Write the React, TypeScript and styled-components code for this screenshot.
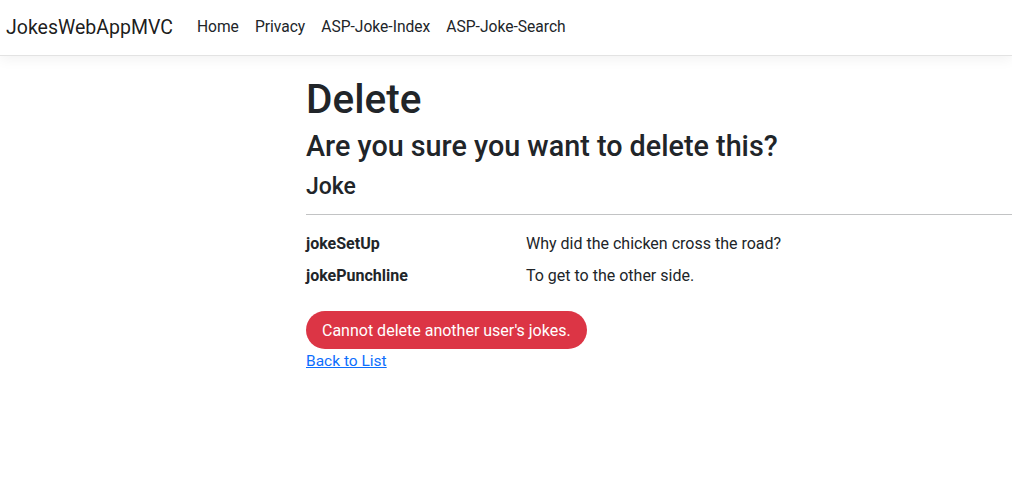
import * as React from "react";
import styled, { createGlobalStyle } from "styled-components";

const GlobalStyle = createGlobalStyle`
  body {
    margin: 0;
    font-family: Roboto, "Noto Sans", sans-serif;
    font-size: 16px;
    line-height: 1.5;
    color: #212529;
    background: #fff;
  }
`;

const Navbar = styled.header`
  display: flex;
  align-items: center;
  height: 55px;
  padding: 0 6px;
  border-bottom: 1px solid #e3e3e3;
  box-shadow: 0 4px 12px rgba(0, 0, 0, 0.05);
`;

const Brand = styled.a`
  font-size: 19.5px;
  color: rgba(0, 0, 0, 0.9);
  text-decoration: none;
  margin-right: 16px;
  white-space: nowrap;
`;

const NavList = styled.nav`
  display: flex;
  align-items: center;
`;

const NavLink = styled.a`
  font-size: 15.6px;
  padding: 8px;
  color: #212529;
  text-decoration: none;
`;

const Main = styled.main`
  display: flex;
  flex-direction: column;
  padding: 19px 0 0 306px;
`;

const Title = styled.h1`
  margin: 0 0 6px;
  font-size: 40.5px;
  line-height: 48px;
  font-weight: 500;
`;

const Question = styled.h3`
  margin: 0 0 9px;
  font-size: 28.75px;
  line-height: 35px;
  font-weight: 500;
`;

const Subject = styled.h4`
  margin: 0;
  font-size: 23px;
  line-height: 28px;
  font-weight: 500;
`;

const Rule = styled.hr`
  margin: 13px 0 17px;
  border: 0;
  border-top: 1px solid #c2c3c4;
`;

const Details = styled.dl`
  display: grid;
  grid-template-columns: 220px 1fr;
  row-gap: 8px;
  margin: 0 0 23px;
`;

const Term = styled.dt`
  font-weight: 700;
  margin: 0;
`;

const Value = styled.dd`
  margin: 0;
`;

const Actions = styled.div`
  display: flex;
  flex-direction: column;
  align-items: flex-start;
`;

const PillButton = styled.button<{ $tone: string }>`
  height: 38px;
  padding: 0 16px;
  border: 0;
  border-radius: 19px;
  background: ${(p) => p.$tone};
  color: #fff;
  font-family: inherit;
  font-size: 16px;
  cursor: pointer;
`;

const BackLink = styled.a`
  color: #0d6efd;
  text-decoration: underline;
  font-size: 15.5px;
  line-height: 24px;
`;

const joke = [
  { label: "jokeSetUp", value: "Why did the chicken cross the road?" },
  { label: "jokePunchline", value: "To get to the other side." },
];

const App: React.FC = () => {
  return (
    <>
      <GlobalStyle />
      <Navbar>
        <Brand href="#">JokesWebAppMVC</Brand>
        <NavList>
          {["Home", "Privacy", "ASP-Joke-Index", "ASP-Joke-Search"].map((l) => (
            <NavLink key={l} href="#">
              {l}
            </NavLink>
          ))}
        </NavList>
      </Navbar>
      <Main>
        <Title>Delete</Title>
        <Question>Are you sure you want to delete this?</Question>
        <div>
          <Subject>Joke</Subject>
          <Rule />
          <Details>
            {joke.map((j) => (
              <React.Fragment key={j.label}>
                <Term>{j.label}</Term>
                <Value>{j.value}</Value>
              </React.Fragment>
            ))}
          </Details>
          <Actions>
            <PillButton $tone="#dc3545">Cannot delete another user's jokes.</PillButton>
            <BackLink href="#">Back to List</BackLink>
          </Actions>
        </div>
      </Main>
    </>
  );
};

export default App;
